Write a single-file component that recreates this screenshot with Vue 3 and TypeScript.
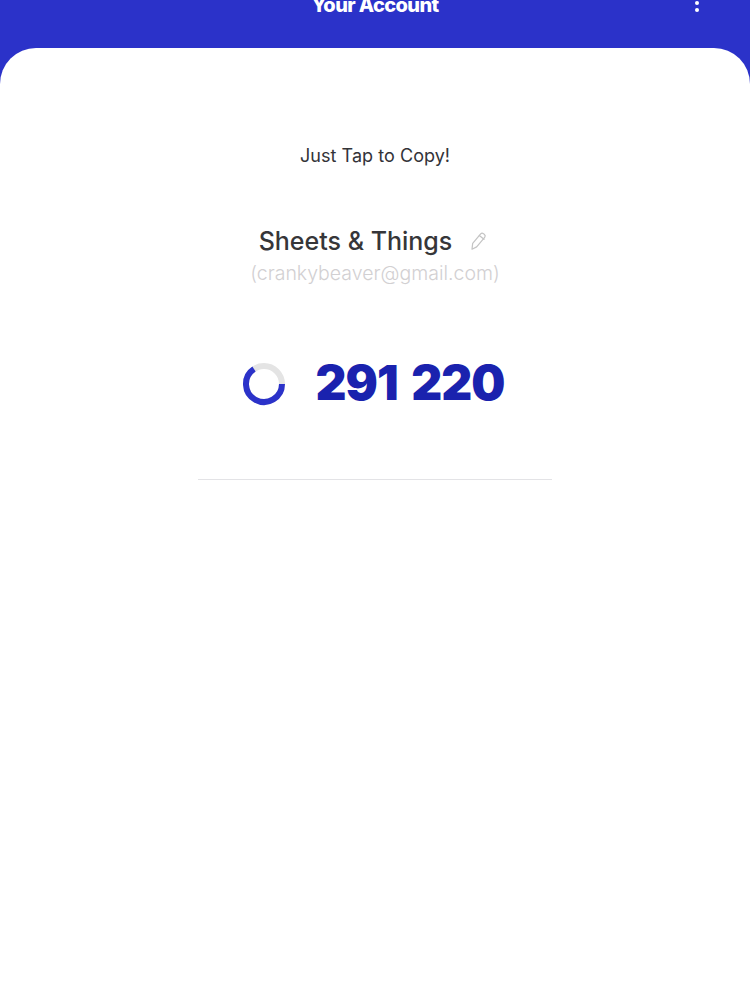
<script setup lang="ts">
const title = 'Your Account'
const code = '291 220'
</script>

<template>
  <div class="screen">
    <header class="bar">
      <span class="side"></span>
      <h1 class="title">{{ title }}</h1>
      <span class="side menu" aria-label="More">
        <i></i><i></i>
      </span>
    </header>
    <main class="card">
      <p class="hint">Just Tap to Copy!</p>
      <div class="name-row">
        <span class="name">Sheets &amp; Things</span>
        <svg class="pencil" viewBox="0 0 18 18" width="20" height="20" fill="none" stroke="#c4c4c4" stroke-width="1.1" stroke-linejoin="round" stroke-linecap="round">
          <path d="M4.2 11.2 11.4 2.6a1.8 1.8 0 0 1 2.5-.2l.9.8a1.8 1.8 0 0 1 .2 2.5L7.8 14.3 3.6 16.4z" />
          <path d="M10.2 4 14.4 7.5" />
        </svg>
      </div>
      <p class="email">(crankybeaver@gmail.com)</p>
      <div class="code-row">
        <svg class="ring" viewBox="0 0 44 44" width="44" height="44" fill="none" stroke-width="6">
          <circle cx="22" cy="22" r="18" stroke="#e4e4e4" />
          <path d="M40 22A18 18 0 1 1 12 7" stroke="#2b32c9" />
        </svg>
        <span class="code">{{ code }}</span>
      </div>
      <hr class="rule" />
    </main>
  </div>
</template>

<style>
html, body { margin: 0; background: #fff; }
</style>

<style scoped>
.screen {
  width: 750px;
  height: 1000px;
  overflow: hidden;
  background: #2b32c9;
  display: flex;
  flex-direction: column;
  font-family: Inter, "Liberation Sans", sans-serif;
}
.bar {
  height: 48px;
  flex: none;
  display: flex;
  align-items: flex-start;
  justify-content: space-between;
  overflow: hidden;
  padding: 0 50px 0 50px;
  box-sizing: border-box;
}
.side {
  width: 40px;
  display: flex;
}
.title {
  margin: -6px 0 0;
  font-size: 20px;
  line-height: 22px;
  font-weight: 800;
  letter-spacing: -0.6px;
  color: #fff;
}
.menu {
  flex-direction: column;
  align-items: flex-end;
  gap: 3px;
  padding-top: 1px;
}
.menu i {
  display: block;
  width: 4px;
  height: 4px;
  border-radius: 50%;
  background: #fff;
  margin-right: 1px;
}
.card {
  flex: 1;
  background: #fff;
  border-radius: 36px 36px 0 0;
  display: flex;
  flex-direction: column;
  align-items: center;
  padding-top: 97px;
}
.hint {
  margin: 0;
  font-size: 18px;
  line-height: 22px;
  color: #333338;
  letter-spacing: 0.05px;
}
.name-row {
  margin: 58px 3px 0 0;
  display: flex;
  align-items: center;
  gap: 16px;
}
.name {
  font-size: 25px;
  line-height: 32px;
  font-weight: 500;
  color: #363639;
}
.pencil {
  flex: none;
}
.email {
  margin: 4px 0 0;
  font-size: 19.5px;
  line-height: 24px;
  color: #d2d0d2;
  font-weight: 300;
}
.code-row {
  margin: 68px 4px 0 0;
  display: flex;
  align-items: center;
  gap: 30px;
}
.ring {
  flex: none;
  margin-top: 2px;
}
.code {
  font-size: 48px;
  line-height: 60px;
  font-weight: 900;
  color: #1a22ae;
  letter-spacing: -1px;
  word-spacing: 5px;
}
.rule {
  margin: 66px 0 0;
  width: 354px;
  border: 0;
  border-top: 1px solid #e3e3e6;
}
</style>
